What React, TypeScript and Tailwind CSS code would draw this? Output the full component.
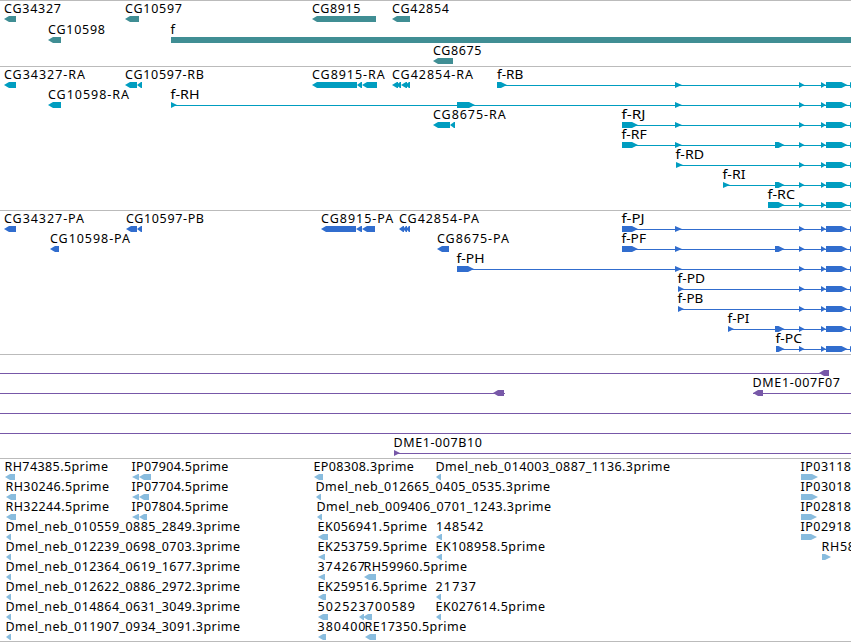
type Label = [row: number, x: number, width: number, text: string];
type Glyph = [row: number, start: number, end: number];

interface Track {
  id: string;
  height: number;
  pitch: number;
  baseline: number;
  color: string;
  labels: Label[];
  left: Glyph[];
  right: Glyph[];
  blocks?: Glyph[];
  lines?: Glyph[];
}

// exons shared by every transcript of the f gene
const fExons = (row: number, from: number): Glyph[] => {
  const exons: Glyph[] = [[row, 675, 682], [row, 799, 804.5], [row, 821, 826], [row, 826, 847.5], [row, 850, 856]];
  return exons.filter(([, start]) => start > from);
};

const tracks: Track[] = [
  {
    id: "genes",
    height: 66,
    pitch: 21,
    baseline: 13,
    color: "fill-[#408e94]",
    labels: [
      [0, 4, 57, "CG34327"],
      [0, 125, 57, "CG10597"],
      [0, 312, 48.5, "CG8915"],
      [0, 392, 57, "CG42854"],
      [1, 48, 57, "CG10598"],
      [1, 170.5, 4.5, "f"],
      [2, 433, 48.5, "CG8675"],
    ],
    left: [[0, 4, 16], [0, 125, 139], [0, 312, 376], [0, 392, 410], [1, 48, 61], [2, 433, 453]],
    right: [],
    blocks: [[1, 171, 851]],
  },
  {
    id: "transcripts",
    height: 144,
    pitch: 20,
    baseline: 13,
    color: "fill-[#009dc0]",
    labels: [
      [0, 4, 81, "CG34327-RA"],
      [0, 125, 79, "CG10597-RB"],
      [0, 312, 72.7, "CG8915-RA"],
      [0, 392, 81, "CG42854-RA"],
      [0, 497, 26.3, "f-RB"],
      [1, 48, 81, "CG10598-RA"],
      [1, 170.5, 29, "f-RH"],
      [2, 433, 72.7, "CG8675-RA"],
      [2, 621.5, 24, "f-RJ"],
      [3, 621.5, 25.3, "f-RF"],
      [4, 675.5, 28.5, "f-RD"],
      [5, 722.5, 23, "f-RI"],
      [6, 767.5, 27.5, "f-RC"],
    ],
    left: [
      [0, 4, 16], [0, 125, 137], [0, 137, 142], [0, 312, 357], [0, 357, 362], [0, 362, 377],
      [0, 392, 398], [0, 396, 401], [0, 401, 407], [0, 405, 410],
      [1, 48, 61], [2, 433, 450], [2, 450, 455],
    ],
    right: [
      [0, 497, 507], ...fExons(0, 497),
      [1, 171, 177], [1, 457, 475], ...fExons(1, 171),
      [2, 622, 638], ...fExons(2, 622),
      [3, 622, 638], [3, 775, 784.5], ...fExons(3, 622),
      [4, 676, 683], ...fExons(4, 676),
      [5, 723, 730], [5, 775, 784.5], ...fExons(5, 723),
      [6, 768, 784.5], ...fExons(6, 768),
    ],
    lines: [[0, 497, 851], [1, 171, 851], [2, 622, 851], [3, 622, 851], [4, 676, 851], [5, 723, 851], [6, 768, 851]],
  },
  {
    id: "coding",
    height: 144,
    pitch: 20,
    baseline: 13,
    color: "fill-[#316dce]",
    labels: [
      [0, 4, 80, "CG34327-PA"],
      [0, 126, 78, "CG10597-PB"],
      [0, 321, 72.3, "CG8915-PA"],
      [0, 399, 80, "CG42854-PA"],
      [0, 621.5, 23, "f-PJ"],
      [1, 50, 80, "CG10598-PA"],
      [1, 437, 72, "CG8675-PA"],
      [1, 621.5, 24.5, "f-PF"],
      [2, 456.5, 28, "f-PH"],
      [3, 677.5, 27.5, "f-PD"],
      [4, 677.5, 25.8, "f-PB"],
      [5, 727.5, 22, "f-PI"],
      [6, 775.5, 26.5, "f-PC"],
    ],
    left: [
      [0, 4, 16], [0, 126, 137], [0, 137, 142], [0, 321, 356], [0, 356, 362], [0, 362, 375],
      [0, 399, 404], [0, 403, 407], [0, 406, 410],
      [1, 50, 59], [1, 437, 449],
    ],
    right: [
      [0, 622, 638], ...fExons(0, 622),
      [1, 622, 638], [1, 775, 784.5], ...fExons(1, 622),
      [2, 457, 474], ...fExons(2, 457),
      [3, 678, 684], ...fExons(3, 678),
      [4, 678, 684], ...fExons(4, 678),
      [5, 728, 734], [5, 775, 784.5], ...fExons(5, 728),
      [6, 776, 784.5], ...fExons(6, 776),
    ],
    lines: [[0, 622, 851], [1, 622, 851], [2, 457, 851], [3, 678, 851], [4, 678, 851], [5, 728, 851], [6, 776, 851]],
  },
  {
    id: "bacs",
    height: 104,
    pitch: 20,
    baseline: 13,
    color: "fill-[#7758a8]",
    labels: [
      [1, 752.5, 87.5, "DME1-007F07"],
      [4, 393.5, 88.5, "DME1-007B10"],
    ],
    left: [[0, 819, 829], [1, 493, 504], [1, 753, 763]],
    right: [[4, 394, 400]],
    lines: [[0, 0, 829], [1, 0, 505], [1, 753, 851], [2, 0, 851], [3, 0, 851], [4, 394, 851]],
  },
  {
    id: "ests",
    height: 183,
    pitch: 20,
    baseline: 13,
    color: "fill-[#88bcde]",
    labels: [
      [0, 4.5, 103.5, "RH74385.5prime"],
      [1, 5.5, 103.5, "RH30246.5prime"],
      [2, 5.5, 103.5, "RH32244.5prime"],
      [3, 5.5, 234.5, "Dmel_neb_010559_0885_2849.3prime"],
      [4, 5.5, 234.5, "Dmel_neb_012239_0698_0703.3prime"],
      [5, 5.5, 234.5, "Dmel_neb_012364_0619_1677.3prime"],
      [6, 5.5, 234.5, "Dmel_neb_012622_0886_2972.3prime"],
      [7, 5.5, 234.5, "Dmel_neb_014864_0631_3049.3prime"],
      [8, 5.5, 234.5, "Dmel_neb_011907_0934_3091.3prime"],
      [0, 131.5, 96.7, "IP07904.5prime"],
      [1, 131.5, 96.7, "IP07704.5prime"],
      [2, 131.5, 96.7, "IP07804.5prime"],
      [0, 313.5, 100.3, "EP08308.3prime"],
      [1, 315.5, 234.5, "Dmel_neb_012665_0405_0535.3prime"],
      [2, 316.5, 234.5, "Dmel_neb_009406_0701_1243.3prime"],
      [3, 317.5, 109.5, "EK056941.5prime"],
      [4, 317.5, 109.5, "EK253759.5prime"],
      [5, 317.5, 47.5, "374267"],
      [6, 317.5, 109.5, "EK259516.5prime"],
      [7, 317.5, 40, "50252"],
      [8, 317.5, 48, "380400"],
      [5, 363.5, 103.5, "RH59960.5prime"],
      [7, 358.5, 56.5, "3700589"],
      [8, 364.5, 101.7, "RE17350.5prime"],
      [0, 435.5, 234.5, "Dmel_neb_014003_0887_1136.3prime"],
      [3, 436, 47.3, "148542"],
      [4, 435.5, 109.5, "EK108958.5prime"],
      [6, 435.5, 40.5, "21737"],
      [7, 435.5, 109.5, "EK027614.5prime"],
      [0, 800.5, 50.5, "IP03118"],
      [1, 800.5, 50.5, "IP03018"],
      [2, 800.5, 50.5, "IP02818"],
      [3, 800.5, 50.5, "IP02918"],
      [4, 821.5, 33.5, "RH58"],
    ],
    left: [
      [0, 5, 15], [1, 6, 16], [2, 6, 16],
      [3, 6, 11], [4, 6, 11], [5, 6, 11], [6, 6, 11], [7, 6, 11], [8, 6, 11],
      [0, 132, 139], [0, 139, 151], [1, 132, 139], [1, 139, 149], [2, 132, 139], [2, 139, 147],
      [0, 314, 323], [1, 316, 321], [2, 317, 322], [3, 318, 328], [4, 318, 325],
      [5, 318, 325], [6, 318, 326], [7, 318, 328], [8, 318, 326],
      [5, 364, 376], [7, 359, 364], [7, 363, 372], [8, 365, 376],
      [0, 436, 441], [3, 436, 442], [4, 436, 442], [6, 436, 441], [7, 436, 441],
    ],
    right: [[0, 801, 818], [1, 801, 818], [2, 801, 817], [3, 801, 817], [4, 822, 831]],
  },
];

function arrowPoints(start: number, end: number, top: number, dir: "left" | "right") {
  const width = end - start;
  const head = width <= 7 ? width : 6;
  const mid = top + 3;
  const bottom = top + 6;
  if (dir === "left") {
    return `${start},${mid} ${start + head - 1},${top} ${end},${top} ${end},${bottom} ${start + head - 1},${bottom}`;
  }
  return `${end},${mid} ${end - head},${top} ${start},${top} ${start},${bottom} ${end - head},${bottom}`;
}

function TrackRow({ track }: { track: Track }) {
  const top = (row: number) => row * track.pitch + track.baseline + 3;
  return (
    <section className="border-t border-[#bbbbbb]">
      {/* the border takes the first pixel, so the drawing starts at y = 1 */}
      <svg
        width={851}
        height={track.height - 1}
        viewBox={`0 1 851 ${track.height - 1}`}
        className={`block ${track.color}`}
      >
        <g shapeRendering="crispEdges">
          {track.lines?.map(([row, start, end], i) => (
            <rect key={i} x={start} y={top(row) + 3} width={end - start} height={1} />
          ))}
          {track.blocks?.map(([row, start, end], i) => (
            <rect key={i} x={start} y={top(row)} width={end - start} height={6} />
          ))}
        </g>
        {track.left.map(([row, start, end], i) => (
          <polygon key={i} points={arrowPoints(start, end, top(row), "left")} />
        ))}
        {track.right.map(([row, start, end], i) => (
          <polygon key={i} points={arrowPoints(start, end, top(row), "right")} />
        ))}
        <g className="fill-black font-['Noto_Sans','DejaVu_Sans',sans-serif] text-[12.5px]">
          {track.labels.map(([row, x, width, text]) => (
            <text
              key={text}
              x={x}
              y={row * track.pitch + track.baseline}
              textLength={width}
              lengthAdjust={text.startsWith("f") ? "spacingAndGlyphs" : "spacing"}
            >
              {text}
            </text>
          ))}
        </g>
      </svg>
    </section>
  );
}

export default function App() {
  return (
    <main className="flex h-[642px] w-[851px] flex-col overflow-hidden border-b border-[#bbbbbb] bg-white">
      {tracks.map((track) => (
        <TrackRow key={track.id} track={track} />
      ))}
    </main>
  );
}
